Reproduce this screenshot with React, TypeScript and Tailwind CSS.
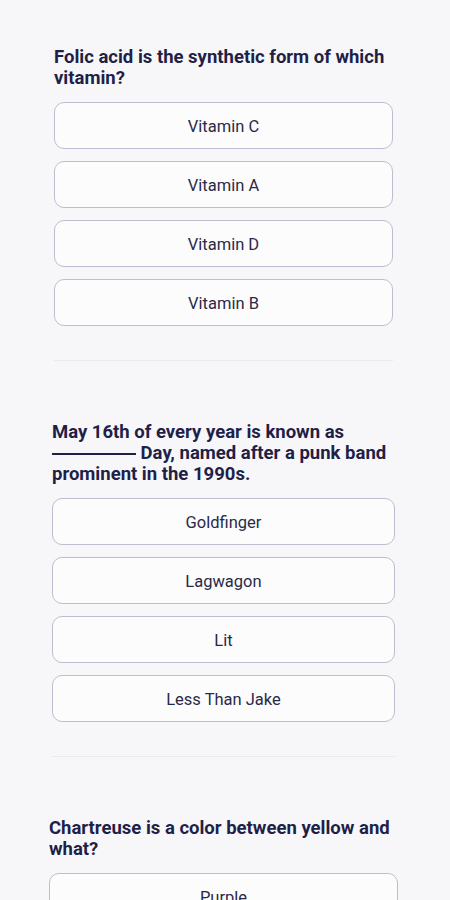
import React from 'react';

type Question = {
    text: React.ReactNode;
    options: string[];
    margin: string;
};

const questions: Question[] = [
    {
        text: 'Folic acid is the synthetic form of which vitamin?',
        options: ['Vitamin C', 'Vitamin A', 'Vitamin D', 'Vitamin B'],
        margin: 'ml-[54px] mr-[57px]',
    },
    {
        text: (
            <>
                May 16th of every year is known as <span className="inline-block w-[84px] border-b-2 border-[#1f1f48] translate-y-[-4px]"></span> Day, named after a punk band prominent in the 1990s.
            </>
        ),
        options: ['Goldfinger', 'Lagwagon', 'Lit', 'Less Than Jake'],
        margin: 'ml-[52px] mr-[55px]',
    },
    {
        text: 'Chartreuse is a color between yellow and what?',
        options: ['Purple', 'Blue', 'Red', 'Orange'],
        margin: 'ml-[49px] mr-[52px]',
    },
];

const OptionButton: React.FC<{ label: string }> = ({ label }) => (
    <button className="h-[47px] w-full rounded-[10px] border border-[#bdbdd0] bg-[#fcfcfd] pt-[3px] text-[16.5px] text-[#2a2a48]">
        {label}
    </button>
);

const App: React.FC = () => {
    return (
        <div className="h-[900px] w-[450px] overflow-hidden bg-[#f7f7f9] pt-[47px]" style={{ fontFamily: 'Roboto, "Liberation Sans", sans-serif' }}>
            {questions.map((q, i) => (
                <div key={i} className={q.margin}>
                    <h2 className="text-[18.5px] font-bold leading-[21px] text-[#1f1f48]">{q.text}</h2>

                    <div className="mt-[13px] flex flex-col gap-[12px]">
                        {q.options.map((opt) => (
                            <OptionButton key={opt} label={opt} />
                        ))}
                    </div>

                    {/* divider between questions */}
                    <hr className="mt-[34px] mb-[61px] border-t border-[#e9e9ef]" />
                </div>
            ))}
        </div>
    );
};

export default App;
